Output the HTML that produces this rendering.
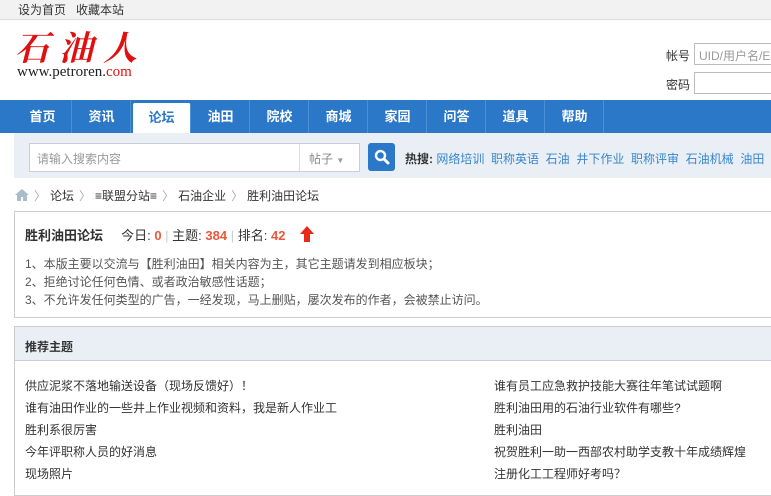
<!DOCTYPE html>
<html><head><meta charset="utf-8"><style>
*{margin:0;padding:0;box-sizing:border-box}
body{width:771px;height:493px;overflow:hidden;background:#fff;font-family:"Liberation Sans","Noto Sans CJK SC",sans-serif;font-size:12px;color:#333;position:relative}
.a{position:absolute;white-space:nowrap}
.top{left:0;top:0;width:771px;height:20px;background:#f2f2f2;border-bottom:1px solid #ddd}
.nav{left:0;top:100px;width:771px;height:33px;background:#2b78c9}
.nav span{position:absolute;top:0;height:33px;line-height:34px;width:58px;text-align:center;color:#fff;font-weight:bold;font-size:13px;border-right:1px solid #4b8fd4}
.srch{left:14px;top:133px;width:757px;height:45px;background:#e9eff5}
.box{border:1px solid #ccc}
.sep{color:#aaa;margin:0 4px 0 5px}
</style></head><body>
<div class="a top"></div>
<div class="a" style="left:18px;top:1px;font-size:12px;color:#333">设为首页&nbsp;&nbsp;&nbsp;收藏本站</div>
<div class="a" style="left:15px;top:28px;font-family:'Noto Serif CJK SC',serif;font-size:34px;color:#e01010;font-style:italic;letter-spacing:10px;line-height:36px;font-weight:bold">石油人</div>
<div class="a" style="left:17px;top:64px;font-family:'Liberation Serif',serif;font-size:15px;color:#222">www.petroren.<span style="color:#e01010">com</span></div>
<div class="a" style="left:666px;top:47px;font-size:12px">帐号</div>
<div class="a" style="left:694px;top:43px;width:80px;height:22px;border:1px solid #bbb;color:#999;padding:3px 4px;font-size:12px;overflow:hidden">UID/用户名/E</div>
<div class="a" style="left:666px;top:76px;font-size:12px">密码</div>
<div class="a" style="left:694px;top:72px;width:80px;height:22px;border:1px solid #bbb"></div>
<div class="a nav">
<span style="left:14px">首页</span><span style="left:73px">资讯</span>
<span style="left:133px;top:3px;height:30px;line-height:30px;background:#fff;color:#2b78c9;border-radius:2px 2px 0 0">论坛</span>
<span style="left:192px">油田</span><span style="left:251px">院校</span><span style="left:310px">商城</span><span style="left:369px">家园</span><span style="left:428px">问答</span><span style="left:487px">道具</span><span style="left:546px">帮助</span>
</div>
<div class="a srch"></div>
<div class="a" style="left:29px;top:143px;width:331px;height:29px;border:1px solid #ccd;background:#fff"></div>
<div class="a" style="left:37px;top:150px;color:#999;font-size:12px">请输入搜索内容</div>
<div class="a" style="left:299px;top:144px;width:1px;height:27px;background:#ddd"></div>
<div class="a" style="left:309px;top:150px;color:#888">帖子 <span style="font-size:8px;color:#999">▼</span></div>
<div class="a" style="left:368px;top:143px;width:27px;height:28px;background:#2b78c9;border-radius:3px"></div>
<svg class="a" style="left:373px;top:148px" width="18" height="18"><circle cx="7.5" cy="7.5" r="4.5" fill="none" stroke="#fff" stroke-width="2.4"/><path d="M11 11l4 4" stroke="#fff" stroke-width="3" stroke-linecap="round"/></svg>
<div class="a" style="left:405px;top:150px;color:#3a85cc"><b style="color:#333">热搜:</b> 网络培训&nbsp; 职称英语&nbsp; 石油&nbsp; 井下作业&nbsp; 职称评审&nbsp; 石油机械&nbsp; 油田</div>
<svg class="a" style="left:14px;top:188px" width="16" height="14"><path d="M1 7L8 1l7 6h-2v6H9V9H7v4H3V7z" fill="#aabbc9"/></svg>
<div class="a" style="left:29px;top:187px;color:#333;font-size:12px"><span class="sep">〉</span>论坛<span class="sep">〉</span>≡联盟分站≡<span class="sep">〉</span>石油企业<span class="sep">〉</span>胜利油田论坛</div>
<div class="a box" style="left:14px;top:211px;width:770px;height:107px"></div>
<div class="a" style="left:25px;top:225px;font-size:13px"><b style="font-size:13px">胜利油田论坛</b>&nbsp;&nbsp;&nbsp;&nbsp; 今日: <b style="color:#e8583a">0</b> <span style="color:#ccc">|</span> 主题: <b style="color:#e8583a">384</b> <span style="color:#ccc">|</span> 排名: <b style="color:#e8583a">42</b></div>
<svg class="a" style="left:299px;top:225px" width="16" height="18"><path d="M8 1L1 9h4v8h6V9h4z" fill="#e8281a"/></svg>
<div class="a" style="left:25px;top:255px;line-height:18px;color:#555;font-size:12px">1、本版主要以交流与【胜利油田】相关内容为主，其它主题请发到相应板块；<br>2、拒绝讨论任何色情、或者政治敏感性话题；<br>3、不允许发任何类型的广告，一经发现，马上删贴，屡次发布的作者，会被禁止访问。</div>
<div class="a box" style="left:14px;top:326px;width:770px;height:170px"></div>
<div class="a" style="left:15px;top:327px;width:760px;height:34px;background:#e9eff5;border-bottom:1px solid #ccd"></div>
<div class="a" style="left:25px;top:338px;font-weight:bold;font-size:12px">推荐主题</div>
<div class="a" style="left:25px;top:375px;line-height:22px;font-size:12px">供应泥浆不落地输送设备（现场反馈好）！<br>谁有油田作业的一些井上作业视频和资料，我是新人作业工<br>胜利系很厉害<br>今年评职称人员的好消息<br>现场照片</div>
<div class="a" style="left:494px;top:375px;line-height:22px;font-size:12px">谁有员工应急救护技能大赛往年笔试试题啊<br>胜利油田用的石油行业软件有哪些?<br>胜利油田<br>祝贺胜利一助一西部农村助学支教十年成绩辉煌<br>注册化工工程师好考吗？</div>
</body></html>
